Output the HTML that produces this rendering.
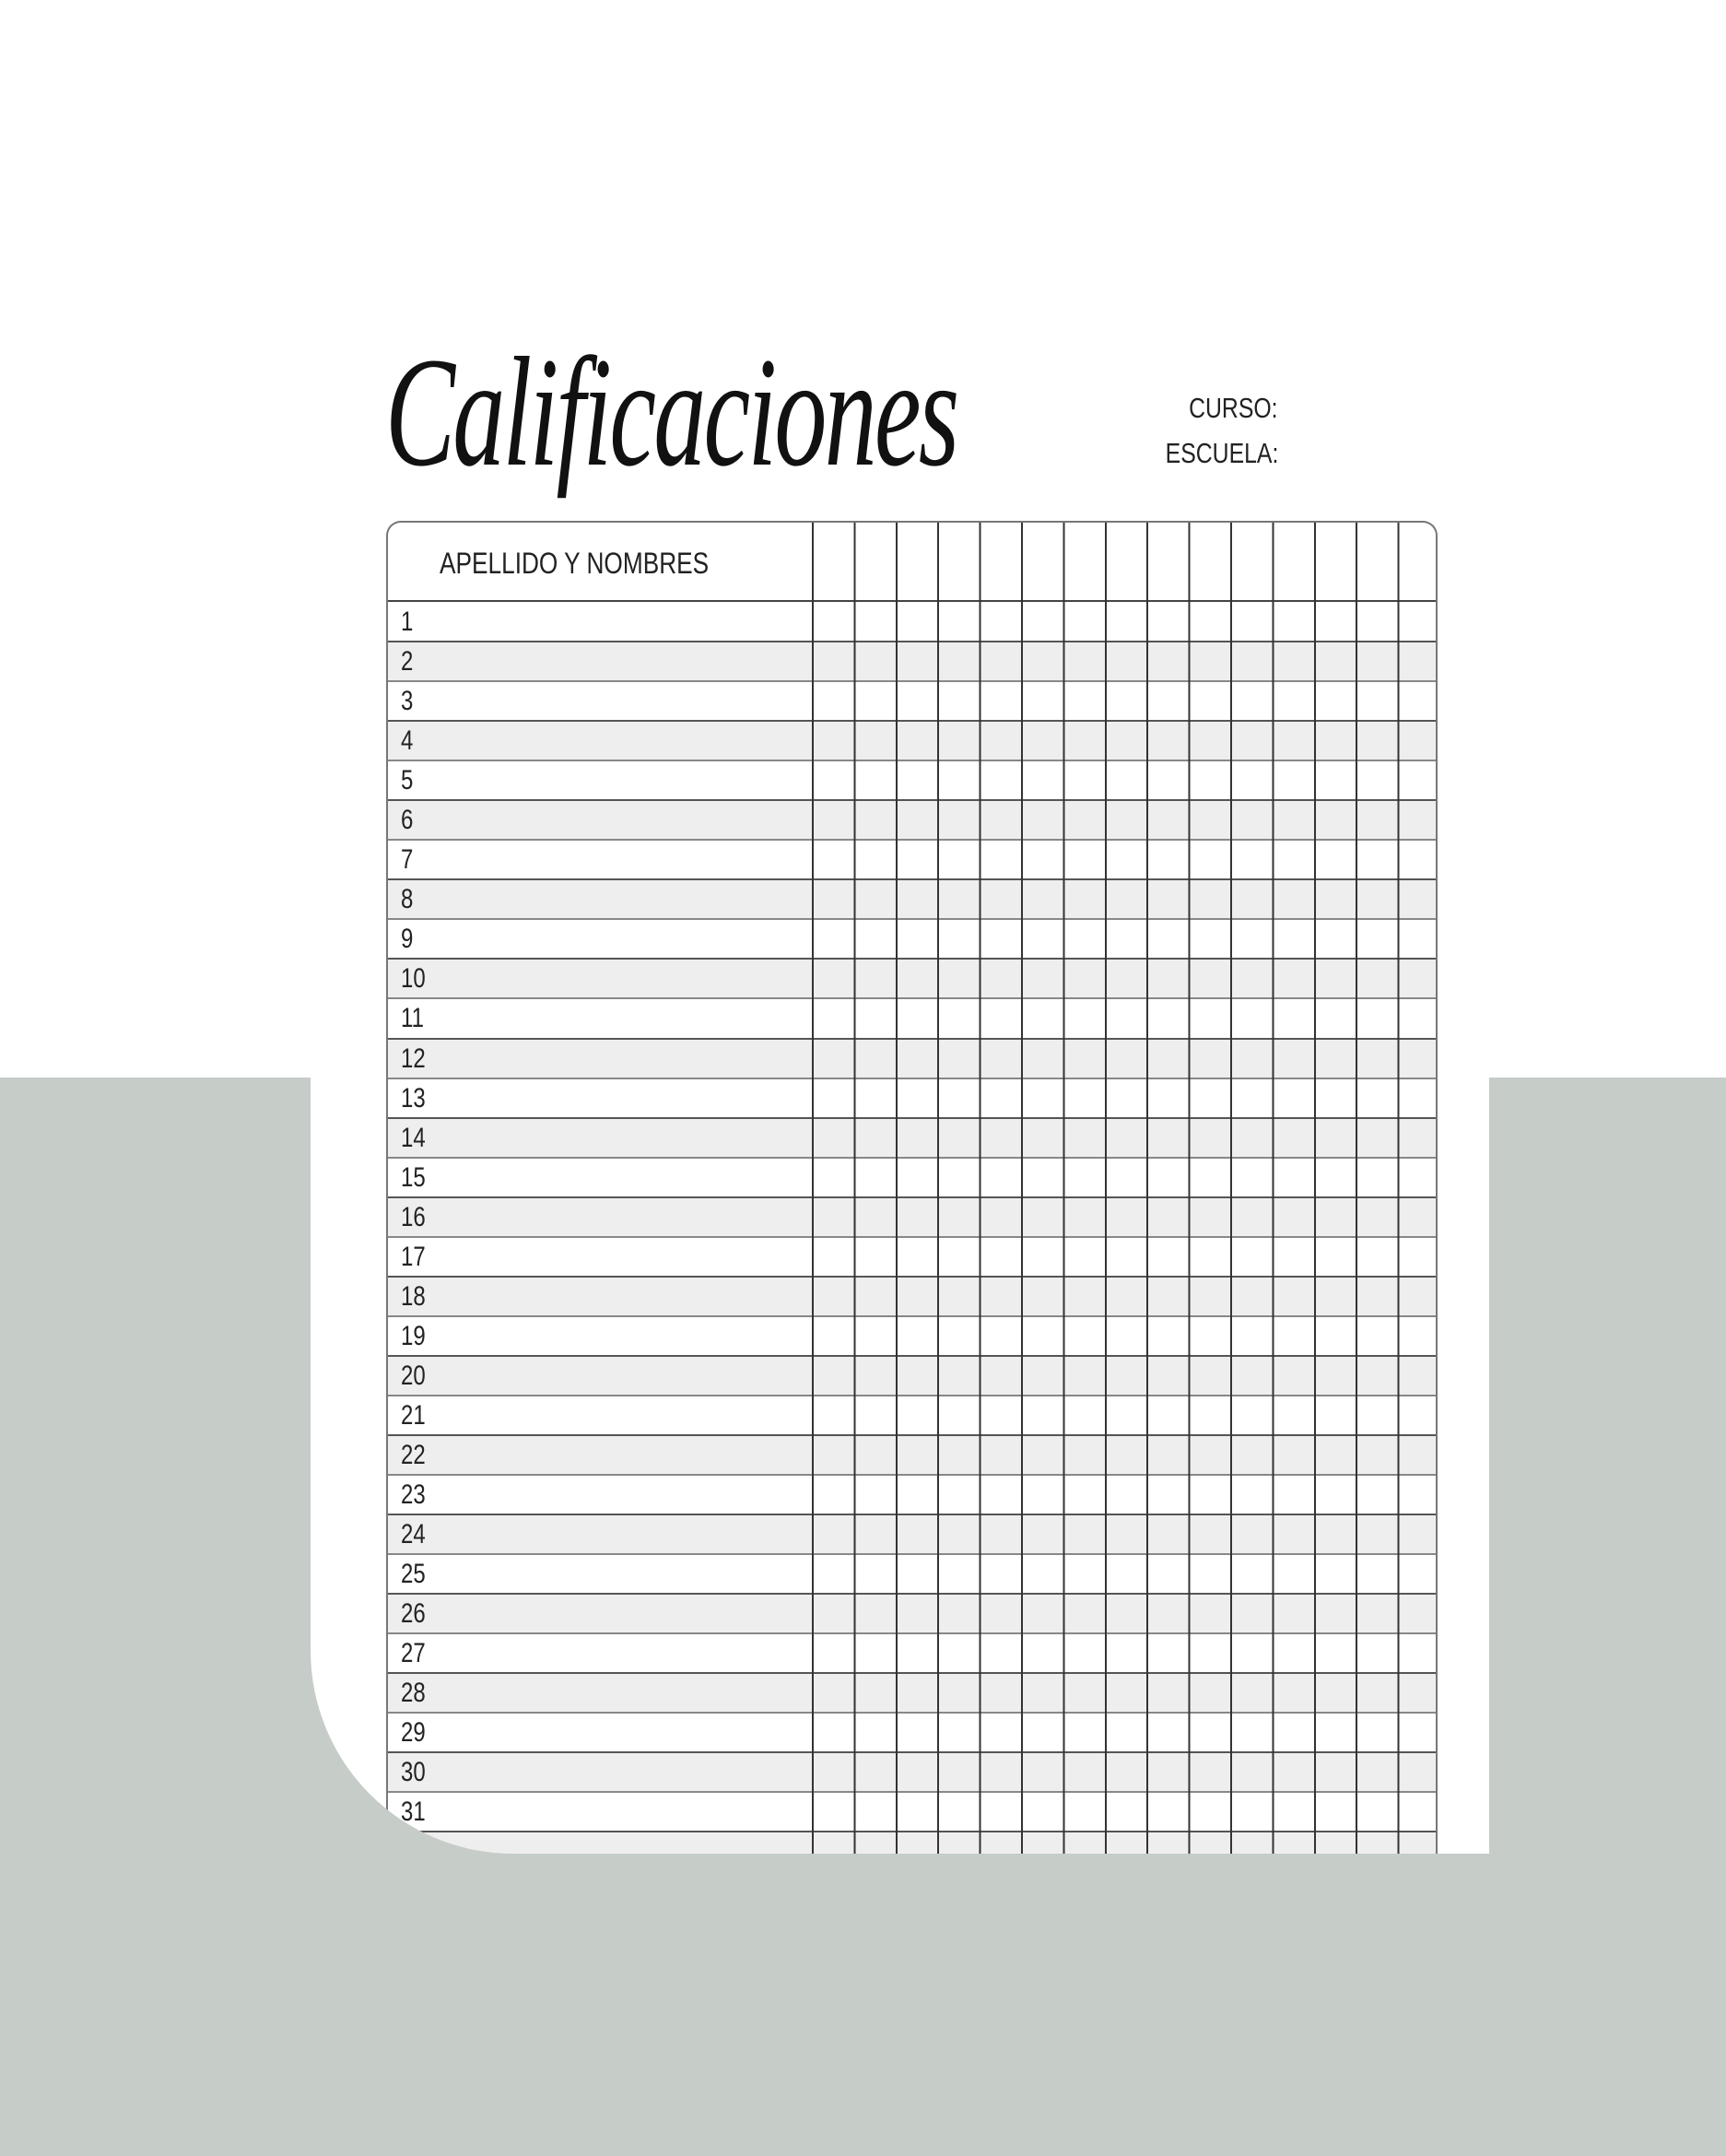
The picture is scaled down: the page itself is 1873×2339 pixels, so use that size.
<!DOCTYPE html>
<html><head><meta charset="utf-8"><style>
*{margin:0;padding:0;box-sizing:border-box}
body{width:1873px;height:2339px;background:#fff;position:relative;overflow:hidden;font-family:"Liberation Sans",sans-serif}
.gray{position:absolute;left:0;top:1169px;width:1873px;height:1170px;background:#c6ccc8}
.panel{position:absolute;left:337px;top:1100px;width:1279px;height:911px;background:#fff;border-bottom-left-radius:220px}
.title{position:absolute;left:418px;top:362px;font-family:"Liberation Serif",serif;font-style:italic;font-size:170px;line-height:1;color:#111;transform:scaleX(0.67);transform-origin:left top;letter-spacing:-4px}
.lbl{position:absolute;right:486px;font-size:31px;color:#222;transform:scaleX(0.8);transform-origin:right center}
.tbl{position:absolute;left:419px;top:565px;width:1141px;height:1446px;border:2px solid #777;border-bottom:none;border-radius:16px 16px 0 0;overflow:hidden;background:#fff}
.head{position:absolute;left:0;top:0;width:100%;height:86px;border-bottom:2px solid #444}
.head span{position:absolute;left:56px;top:26px;font-size:32px;color:#222;transform:scaleX(0.82);transform-origin:left center;white-space:nowrap}
.rows{position:absolute;left:0;top:87px;width:100%}
.r{height:43.05px;border-bottom:2px solid #555;position:relative;font-size:30px;color:#222}
.r:nth-child(even){background:#efeeee;border-bottom-color:#888}
.r span{position:absolute;left:14px;top:4px;transform:scaleX(0.8);transform-origin:left center}
.cols{position:absolute;left:460px;top:0;width:681px;height:100%;border-left:2px solid #333;
background:repeating-linear-gradient(90deg,transparent 0,transparent 43.4px,#333 43.4px,#333 45.4px)}
</style></head><body>
<div class="gray"></div>
<div class="panel"></div>
<div class="title">Calificaciones</div>
<div class="lbl" style="top:425px">CURSO:</div>
<div class="lbl" style="top:474px">ESCUELA:</div>
<div class="tbl">
<div class="head"><span>APELLIDO Y NOMBRES</span></div>
<div class="rows">
<div class="r"><span>1</span></div><div class="r"><span>2</span></div><div class="r"><span>3</span></div><div class="r"><span>4</span></div><div class="r"><span>5</span></div><div class="r"><span>6</span></div><div class="r"><span>7</span></div><div class="r"><span>8</span></div><div class="r"><span>9</span></div><div class="r"><span>10</span></div><div class="r"><span>11</span></div><div class="r"><span>12</span></div><div class="r"><span>13</span></div><div class="r"><span>14</span></div><div class="r"><span>15</span></div><div class="r"><span>16</span></div><div class="r"><span>17</span></div><div class="r"><span>18</span></div><div class="r"><span>19</span></div><div class="r"><span>20</span></div><div class="r"><span>21</span></div><div class="r"><span>22</span></div><div class="r"><span>23</span></div><div class="r"><span>24</span></div><div class="r"><span>25</span></div><div class="r"><span>26</span></div><div class="r"><span>27</span></div><div class="r"><span>28</span></div><div class="r"><span>29</span></div><div class="r"><span>30</span></div><div class="r"><span>31</span></div><div class="r"></div>
</div>
<div class="cols"></div>
</div>
<div class="gray" style="top:2011px;height:328px"></div>
<div style="position:absolute;left:0;top:1169px;width:337px;height:842px;background:#c6ccc8"></div>
<div style="position:absolute;left:1616px;top:1169px;width:257px;height:842px;background:#c6ccc8"></div>
<svg style="position:absolute;left:337px;top:1791px" width="220" height="220"><path d="M0 0 A220 220 0 0 0 220 220 L0 220 Z" fill="#c6ccc8"/></svg>
</body></html>
